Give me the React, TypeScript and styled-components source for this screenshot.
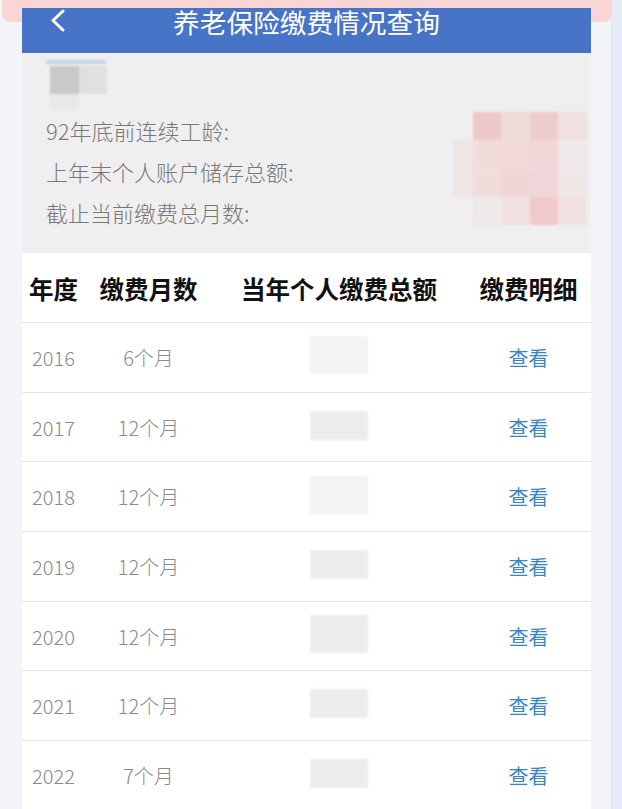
import React from "react";
import styled, { createGlobalStyle } from "styled-components";

const GlobalStyle = createGlobalStyle`
  html, body { margin: 0; padding: 0; }
  body {
    background: linear-gradient(to right, #f3f4f9 0, #f3f4f9 611px, #f6dede 611px, #f6dede 612px, #e4ebf7 612px);
    font-family: "Noto Sans CJK SC", "Noto Sans", sans-serif;
    overflow: hidden;
  }
`;

const Page = styled.div`
  position: relative;
  width: 622px;
  height: 809px;
  padding: 8px 31px 0 22px;
  box-sizing: border-box;
  overflow: hidden;
`;

const TopBar = styled.div`
  position: absolute;
  top: 0;
  left: 2px;
  width: 610px;
  height: 22px;
  background: #f8d6d6;
  border-radius: 0 0 8px 8px;
  z-index: 0;
`;

const Panel = styled.div`
  position: relative;
  z-index: 1;
  background: #ffffff;
  display: flex;
  flex-direction: column;
`;

const Header = styled.div`
  height: 45px;
  background: #4774c6;
  display: grid;
  grid-template-columns: 60px 1fr 60px;
  align-items: start;
  color: #ffffff;
`;

const BackButton = styled.div`
  display: flex;
  justify-content: flex-start;
  padding: 1px 0 0 26px;
`;

const Title = styled.div`
  text-align: center;
  font-size: 26.7px;
  line-height: 27px;
  padding-top: 0px;
`;

const Info = styled.div`
  background: #efefef;
  height: 200px;
  box-sizing: border-box;
  padding: 7px 4px 0 24px;
  display: flex;
  justify-content: space-between;
`;

const InfoLeft = styled.div`
  display: flex;
  flex-direction: column;
`;

const Avatar = styled.div`
  width: 80px;
  height: 50px;
  margin-left: -4px;
  filter: blur(1.2px);
`;

const Label = styled.div`
  font-size: 22px;
  font-weight: 300;
  line-height: 41px;
  color: #787878;
  white-space: nowrap;
`;

const Mosaic = styled.div`
  margin-top: 52px;
  width: 134px;
  height: 113px;
  filter: blur(0.8px);
`;

const Row = styled.div<{ $head?: boolean }>`
  display: grid;
  grid-template-columns: 63px 127px 254px 125px;
  height: ${(p) => (p.$head ? "70px" : "69.7px")};
  align-items: center;
  border-bottom: 1px solid #e6e6e6;
  box-sizing: border-box;
`;

const HeadCell = styled.div`
  text-align: center;
  font-size: 24.5px;
  font-weight: 600;
  color: #111111;
  white-space: nowrap;
  margin-top: 2px;
`;

const Cell = styled.div<{ $link?: boolean }>`
  display: flex;
  justify-content: center;
  font-size: 20px;
  font-weight: ${(p) => (p.$link ? 400 : 300)};
  color: ${(p) => (p.$link ? "#3a86c2" : "#8a8a8a")};
  white-space: nowrap;
`;

const Hidden = styled.div<{ $tall?: boolean; $faint?: boolean }>`
  width: 58px;
  height: ${(p) => (p.$tall ? "38px" : "29px")};
  background: ${(p) => (p.$faint ? "#f3f3f3" : "#ececec")};
  filter: blur(1px);
  margin-top: -4px;
`;

const ChevronLeft = () => (
  <svg width="20" height="24" viewBox="0 0 20 24">
    <polyline points="15,2 5,11.5 15,21" fill="none" stroke="#ffffff" strokeWidth="3" strokeLinecap="round" strokeLinejoin="round" />
  </svg>
);

const AvatarBlur = () => (
  <svg width="80" height="50" viewBox="0 0 80 50">
    <rect x="4" y="0" width="60" height="4" fill="#c6d3ea" />
    <rect x="8" y="6" width="29" height="28" fill="#c9c9c9" />
    <rect x="37" y="6" width="28" height="28" fill="#e0e0e0" />
    <rect x="8" y="34" width="29" height="16" fill="#e8e8e8" />
  </svg>
);

const pinkCells: string[][] = [
  ["#eec9ca", "#f0dada", "#efcccc", "#f0e0e0"],
  ["#f1dcdc", "#f1d8d9", "#f1d6d8", "#efe9e9"],
  ["#f1dcdc", "#f0d5d7", "#f0d6d8", "#efe6e6"],
  ["#f0e9e9", "#f0e0e0", "#f0c9ce", "#f0e1e1"],
];

const PinkMosaic = () => (
  <svg width="134" height="113" viewBox="0 0 134 113">
    <rect x="0" y="28" width="20" height="57" fill="#f0e4e4" />
    {pinkCells.map((row, r) =>
      row.map((c, i) => <rect key={`${r}-${i}`} x={20 + i * 28.5} y={r * 28.25} width="28.6" height="28.3" fill={c} />)
    )}
  </svg>
);

const rows = [
  { year: "2016", months: "6个月", tall: true, faint: true },
  { year: "2017", months: "12个月" },
  { year: "2018", months: "12个月", tall: true, faint: true },
  { year: "2019", months: "12个月" },
  { year: "2020", months: "12个月", tall: true },
  { year: "2021", months: "12个月" },
  { year: "2022", months: "7个月" },
];

export default function App() {
  return (
    <>
      <GlobalStyle />
      <Page>
        <TopBar />
        <Panel>
          <Header>
            <BackButton>
              <ChevronLeft />
            </BackButton>
            <Title>养老保险缴费情况查询</Title>
            <div />
          </Header>
          <Info>
            <InfoLeft>
              <Avatar>
                <AvatarBlur />
              </Avatar>
              <Label>92年底前连续工龄:</Label>
              <Label>上年末个人账户储存总额:</Label>
              <Label>截止当前缴费总月数:</Label>
            </InfoLeft>
            <Mosaic>
              <PinkMosaic />
            </Mosaic>
          </Info>
          <Row $head>
            <HeadCell>年度</HeadCell>
            <HeadCell>缴费月数</HeadCell>
            <HeadCell>当年个人缴费总额</HeadCell>
            <HeadCell>缴费明细</HeadCell>
          </Row>
          {rows.map((r) => (
            <Row key={r.year}>
              <Cell>{r.year}</Cell>
              <Cell>{r.months}</Cell>
              <Cell>
                <Hidden $tall={r.tall} $faint={r.faint} />
              </Cell>
              <Cell $link>查看</Cell>
            </Row>
          ))}
        </Panel>
      </Page>
    </>
  );
}
